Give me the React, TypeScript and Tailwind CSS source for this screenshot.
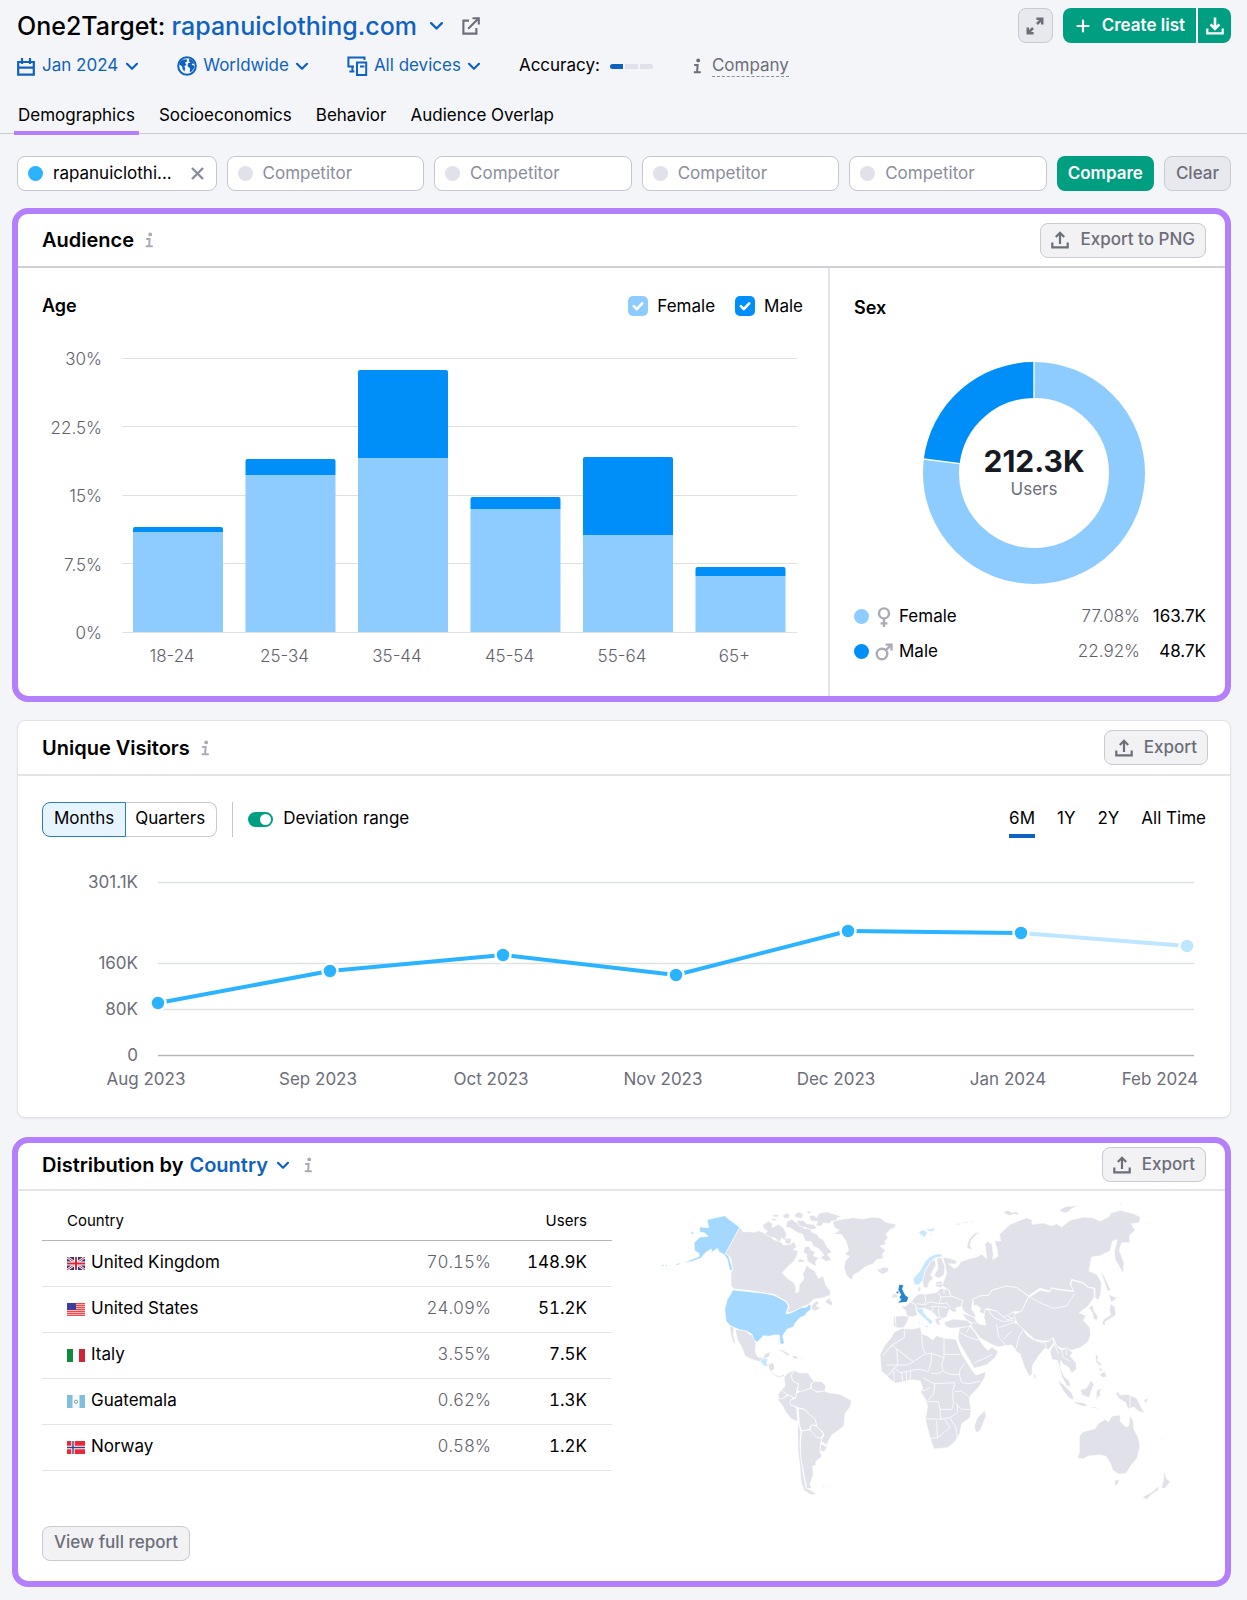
import React, { useState } from 'react';

const ages = [
    { label: '18-24', top: 177, split: 182 },
    { label: '25-34', top: 109, split: 125 },
    { label: '35-44', top: 20, split: 108 },
    { label: '45-54', top: 147, split: 159 },
    { label: '55-64', top: 107, split: 185 },
    { label: '65+', top: 217, split: 226 },
];

const ageTicks = ['30%', '22.5%', '15%', '7.5%', '0%'];

const visits = [
    { x: 116, y: 143, label: 'Aug 2023', lx: 104 },
    { x: 288, y: 111, label: 'Sep 2023', lx: 276 },
    { x: 461, y: 95, label: 'Oct 2023', lx: 449 },
    { x: 634, y: 115, label: 'Nov 2023', lx: 621 },
    { x: 806, y: 71, label: 'Dec 2023', lx: 794 },
    { x: 979, y: 73, label: 'Jan 2024', lx: 966 },
    { x: 1145, y: 86, label: 'Feb 2024', lx: 1118 },
];

const visitTicks = [
    { y: 22, label: '301.1K' },
    { y: 103, label: '160K' },
    { y: 149, label: '80K' },
    { y: 195, label: '0' },
];

const countries = [
    { code: 'gb', name: 'United Kingdom', share: '70.15%', users: '148.9K' },
    { code: 'us', name: 'United States', share: '24.09%', users: '51.2K' },
    { code: 'it', name: 'Italy', share: '3.55%', users: '7.5K' },
    { code: 'gt', name: 'Guatemala', share: '0.62%', users: '1.3K' },
    { code: 'no', name: 'Norway', share: '0.58%', users: '1.2K' },
];

// land shapes, Americas and Greenland
const landWest = [
    'M269 109L280 122 300 122 312 124 326 119 350 128 372 146 392 152 400 162 420 160 432 152 440 168 430 176 445 180 440 196 430 214 415 225 397 245 410 260 432 275 438 290 437 305 446 303 448 280 462 264 458 248 464 238 470 222 480 232 495 240 505 262 520 255 527 282 541 300 541 312 520 320 492 325 476 340 452 350 430 362 410 365 418 345 408 330 372 310 300 299 252 294 243 285 243 245 248 236 242 200 226 188Z',
    'M338 102L355 90 368 98 366 110 385 100 400 110 410 130 404 150 396 140 388 154 376 142 362 138 344 130 352 120 342 114Z',
    'M410 92L425 84 440 95 458 100 462 112 480 112 485 124 500 128 508 140 520 146 530 166 546 184 532 190 545 207 528 212 512 200 522 192 505 172 490 166 484 152 466 150 458 130 440 124 424 112 408 108Z',
    'M442 208L452 204 468 210 458 214 446 213Z',
    'M464 168L478 166 484 178 496 182 490 195 506 200 496 212 500 226 486 220 472 210 470 190 460 184Z',
    'M408 140L416 144 422 138 424 156 412 160 404 152Z',
    'M364 74L378 70 390 74 378 79Z',
    'M398 72L412 66 420 72 416 82 402 82Z',
    'M432 72L446 62 460 70 456 82 438 80Z',
    'M470 60L480 60 484 66 474 68Z',
    'M360 84L372 82 384 88 372 90Z',
    'M476 76L490 72 500 80 508 66 530 62 548 68 575 76 560 82 562 90 544 90 540 98 520 96 512 106 496 104 504 92 484 90Z',
    'M440 88L460 88 470 98 490 100 502 112 484 116 462 108 446 104Z',
    'M548 92L575 85 610 80 640 84 665 78 690 80 708 94 738 100 736 108 720 116 708 128 714 142 704 150 708 160 690 165 706 178 698 188 700 202 680 206 670 218 645 228 628 242 610 252 606 267 590 255 582 230 585 212 598 196 584 190 596 178 588 150 574 130 550 130 568 118 552 108Z',
    'M680 230L690 236 698 228 716 230 714 242 698 250 686 244Z',
    'M525 332L540 318 540 328 548 333 546 344 534 340Z',
    'M484 346L490 336 500 330 508 336 498 344 512 350 496 360 486 356Z',
    'M238 406L252 408 250 430 257 458 250 456 243 432Z',
    'M255 414L290 420 300 432 308 430 318 456 316 482 324 498 340 500 346 487 362 484 358 497 345 503 336 505 330 513 305 505 285 495 276 470 262 445Z',
    'M354 520L370 515 374 532 364 542 374 550 388 556 402 550 404 556 385 560 368 550 356 532Z',
    'M380 478L396 476 420 490 414 495 396 482Z',
    'M424 495L436 494 446 500 436 505Z',
    'M451 502L460 502 458 506Z',
    'M402 560L410 548 424 541 434 536 424 552 428 570 446 578 440 600 437 622 415 612 392 600 405 585Z',
    'M434 538L450 546 474 545 480 556 492 570 482 580 482 592 465 598 452 604 443 598 446 578 428 570 424 552Z',
    'M492 570L515 572 528 585 524 600 498 602 484 592 484 580Z',
    'M392 598L412 610 402 620 388 628 384 612Z',
    'M382 624L400 622 415 612 430 620 420 640 440 650 443 692 424 684 408 664 396 642Z',
    'M437 622L440 606 465 598 485 592 500 604 524 600 535 605 570 610 604 628 602 646 585 668 582 705 560 722 545 732 530 762 510 748 522 735 518 722 500 708 496 685 478 672 465 655 445 650 420 640 422 626Z',
    'M445 652L465 656 480 672 496 685 499 703 484 702 478 715 455 720 448 700Z',
    'M484 702L500 706 520 728 514 742 500 740 480 718Z',
    'M455 720L480 716 500 740 516 742 511 760 510 782 516 796 497 812 498 822 488 826 490 850 480 880 486 892 470 892 462 850 452 800 452 750Z',
    'M512 758L532 768 522 782 510 780Z',
    'M443 694L453 722 450 750 452 800 460 850 468 892 480 896 502 910 482 911 462 898 453 870 450 830 444 780Z',
    'M724 322L730 308 742 310 742 320Z',
    'M515 886L522 884 520 890ZM526 886L532 885 530 890Z',
];

// land shapes, Europe, Africa, Asia and Oceania
const landEast = [
    'M72 424L95 412 130 414 152 408 158 430 172 434 188 447 200 434 225 442 258 445 262 456 275 488 292 515 308 540 318 552 348 542 345 558 325 590 303 612 298 625 303 655 300 680 275 698 270 725 255 752 232 770 192 774 180 740 166 685 173 645 165 622 152 604 157 590 150 570 125 566 100 572 75 577 50 555 34 540 30 490 45 462 62 442Z',
    'M345 658L348 676 330 720 318 725 313 705 322 680Z',
    'M72 376L100 374 118 378 110 395 102 410 78 411 70 402Z',
    'M92 346L108 345 120 332 138 342 138 358 142 372 128 378 112 376 106 358Z',
    'M138 314L150 308 168 310 200 304 212 292 236 296 242 314 278 328 275 346 256 352 262 360 250 364 238 355 230 378 215 384 204 380 186 362 164 352 140 356 138 342 124 332 130 324Z',
    'M194 384L212 378 216 384 206 390 214 404 200 400Z',
    'M143 292L152 284 152 300 144 302Z',
    'M166 238L182 212 194 205 198 222 188 240 182 252 190 262 178 272 172 292 160 288 157 268Z',
    'M200 202L215 200 225 228 222 252 206 262 192 254 204 232Z',
    'M198 272L216 270 222 284 212 290 196 286Z',
    'M218 198L240 202 262 210 256 220 236 218 252 232 264 226 272 212 292 205 320 198 335 190 350 202 345 160 352 150 366 160 370 190 368 205 384 196 382 178 374 150 392 150 388 130 420 100 446 90 470 80 486 86 486 100 520 96 545 104 560 98 575 108 600 88 640 78 668 80 690 90 718 76 722 66 750 58 790 68 812 78 808 96 784 98 795 118 778 135 780 155 755 155 748 178 762 215 760 248 735 205 733 180 742 146 728 150 720 180 690 195 665 198 657 240 680 250 695 275 692 310 685 328 675 320 675 292 655 288 640 275 605 265 600 280 612 300 570 295 545 290 540 300 510 292 476 314 440 290 410 285 365 298 358 312 330 315 308 325 305 355 325 382 300 374 280 360 275 345 278 328 242 314 238 298 216 284 222 268 230 248 226 225Z',
    'M330 315L358 312 365 298 410 285 440 290 476 316 462 345 455 362 430 362 415 374 400 378 380 360 350 352 345 370 325 362 312 345 308 325Z',
    'M345 354L380 360 400 378 430 364 440 375 434 396 452 402 462 418 446 440 448 460 436 478 425 462 400 465 384 468 360 458 330 440 312 418 302 402 310 386 330 400 348 402 342 380Z',
    'M222 394L250 384 290 388 306 400 296 408 266 410 240 412 226 404Z',
    'M275 366L310 378 324 396 306 396 288 384Z',
    'M268 412L300 405 316 425 330 448 340 464 354 478 366 468 385 482 375 500 350 522 312 532 300 510 285 485 268 456 264 440Z',
    'M446 440L460 415 470 432 490 446 520 452 535 452 548 440 552 455 536 476 525 472 508 492 488 522 486 550 478 556 462 525 450 488 436 480Z',
    'M475 320L510 298 540 302 545 292 570 297 612 302 602 282 606 268 640 277 655 290 672 292 673 318 655 345 640 356 628 366 648 374 640 388 660 410 662 430 655 452 630 470 605 478 590 474 575 472 560 465 550 440 535 450 520 450 490 445 465 420 440 395 432 370 455 360Z',
    'M550 442L560 465 575 478 590 470 608 484 600 495 618 515 620 535 605 546 595 528 580 520 572 508 572 530 582 556 598 570 602 588 590 584 575 556 568 525 562 508 546 506 540 480 552 460Z',
    'M656 350L668 342 672 360 684 376 680 390 670 382 668 366Z',
    'M722 338L735 348 738 372 720 384 706 392 704 406 696 396 702 384 722 372 718 356Z',
    'M716 310L728 316 742 320 724 334Z',
    'M690 238L704 258 722 296 714 302 702 270Z',
    'M562 567L580 580 606 606 612 627 598 622 580 600Z',
    'M612 632L640 635 656 645 640 646 616 638ZM662 648L676 648 690 654 670 652Z',
    'M630 598L650 590 662 568 672 580 664 600 658 620 636 612Z',
    'M680 598L696 592 690 602 692 622 686 614 678 630Z',
    'M736 606L746 602 750 612 775 610 800 622 812 645 824 667 805 660 792 648 774 654 766 634 748 624Z',
    'M676 490L685 495 682 508 696 520 690 526 678 512ZM688 552L704 540 710 556 700 560ZM686 530L700 534 690 542Z',
    'M492 546L498 555 496 564 491 560ZM666 450L670 452 668 462Z',
    'M628 735L640 722 675 713 684 698 705 685 715 692 726 675 752 672 750 690 768 708 776 704 780 672 790 690 792 715 805 740 810 765 802 800 782 825 768 848 745 849 728 838 722 818 708 796 690 792 655 795 640 804 622 802 628 785Z',
    'M735 866L749 868 742 882 734 884Z',
    'M882 838L890 864 901 872 885 892 873 892 880 870Z',
    'M865 886L866 896 842 912 830 926 817 918 845 904Z',
    'M334 121L318 132 304 148 300 164 308 176 290 172 296 146 312 128Z',
    'M398 64L414 58 424 64 442 62 446 72 430 70 418 74Z',
    'M568 56L588 46 622 44 604 54 590 66 576 64Z',
    'M744 40L752 36 756 40ZM258 100L268 94 268 104ZM280 94L294 92 290 98ZM302 92L312 88 310 94Z',
    'M872 738L882 748 876 746ZM820 628L834 620 830 636Z',
    'M826 96L836 97 832 100Z',
];

const borders = [
    'M103 416L103 440 66 462 40 492M80 474L130 512 162 490 185 487M152 410L155 430 158 470 165 486M66 462L80 474 84 522 50 522M84 522L60 542M84 522L112 522 130 512M185 487L222 500 222 440M222 490L270 490',
    'M185 487L183 515 175 542 150 535 122 538 120 566M183 546L205 548 218 540 240 550 268 550M222 500L215 520 218 540M285 515L270 535 268 550 275 575 300 578 330 570M160 560L185 575 195 578 190 610 172 630M195 578L255 575',
    'M172 632L205 632 210 655 245 655 250 640 248 600 255 575',
    'M255 602L275 600 302 622M255 635L275 655 303 655M210 655L212 685 165 683M212 685L240 680 262 665 262 640M200 690L202 740 182 742M202 740L225 722 240 710 225 685M240 680L258 710 262 742M95 545L98 572M108 542L110 570M50 555L72 540 72 576M120 540L90 545 70 530M150 570L160 600 180 590',
    'M480 318L510 335 550 352 590 345 602 325 614 308',
    'M164 312L168 330 160 342M140 338L165 342 180 332 208 338 212 318 204 304M180 348L200 346 232 350M212 318L242 316M208 338L232 336 240 350M205 350L208 378M186 362L190 350M222 290L222 308',
    'M350 352L372 380 400 392 430 388M380 400L386 440 408 462M386 410L420 398 440 392M425 420L400 445M270 425L300 440 330 448M312 515L350 500 365 490M300 404L290 425',
    'M524 452L530 478M575 478L580 500 600 510M588 474L590 492M552 455L566 490M462 418L500 450 520 456M780 612L780 656M76 376L78 410',
    'M400 378L412 386 434 380M412 374L430 384M196 280L220 278',
];

function Chevron({ size = 14 }: { size?: number }) {
    return (
        <svg width={size} height={size} viewBox="0 0 14 14" fill="none" stroke="currentColor" strokeWidth="2.2" strokeLinecap="round" strokeLinejoin="round">
            <path d="M2 4.8l5 5 5-5" />
        </svg>
    )
}

function Info({ className }: { className: string }) {
    return (
        <svg className={className} width="9" height="16" viewBox="0 0 9 16" fill="none" stroke="currentColor" strokeWidth="2">
            <circle cx="5.2" cy="2.4" r="1.9" fill="currentColor" stroke="none" />
            <path d="M1.2 7h3.4l-.5 7M.8 14.2h7" />
        </svg>
    )
}

function TrayIcon({ down }: { down?: boolean }) {
    return (
        <svg width="18" height="18" viewBox="0 0 18 18" fill="none" stroke="currentColor" strokeWidth="2.2">
            <path d="M1.3 11.6v4.8h15.4v-4.8" />
            {down
                ? <path strokeWidth="2.6" d="M9 .6v10.8M4.6 7.4L9 11.8l4.4-4.4" />
                : <path d="M9 13V2.4M4.8 6L9 1.8 13.2 6" />}
        </svg>
    )
}

function ExportButton({ label }: { label: string }) {
    return (
        <button className="flex h-[35px] items-center gap-[11px] rounded-lg border border-[#c9cad2] bg-[#f2f2f5] px-[10px] text-[17px] font-medium text-[#6c6e79]">
            <TrayIcon />
            {label}
        </button>
    )
}

function Flag({ code }: { code: string }) {
    return (
        <svg width="18" height="13" viewBox="0 0 18 13" className="shrink-0">
            {code === 'gb' && <>
                <path fill="#27337d" d="M0 0h18v13H0z" />
                <path stroke="#fff" strokeWidth="2.6" d="M0 0l18 13M18 0L0 13" />
                <path stroke="#d8263c" strokeWidth="1" d="M0 0l18 13M18 0L0 13" />
                <path stroke="#fff" strokeWidth="4" d="M9 0v13M0 6.5h18" />
                <path stroke="#d8263c" strokeWidth="2" d="M9 0v13M0 6.5h18" />
            </>}
            {code === 'us' && <>
                <path fill="#fbb4b4" d="M0 0h18v13H0z" />
                <path stroke="#f0474c" strokeWidth="1" d="M0 .5h18M0 2.5h18M0 4.5h18M0 6.5h18M0 8.5h18M0 10.5h18M0 12.5h18" />
                <path fill="#3a3f9b" d="M0 0h9v7H0z" />
            </>}
            {code === 'it' && <>
                <path fill="#fafafa" d="M0 0h18v13H0z" />
                <path fill="#128a3e" d="M0 0h6v13H0z" />
                <path fill="#cc2637" d="M12 0h6v13h-6z" />
            </>}
            {code === 'gt' && <>
                <path fill="#f6f9fb" d="M0 0h18v13H0z" />
                <path fill="#81bede" d="M0 0h5.5v13H0zM12.5 0H18v13h-5.5z" />
                <circle cx="9" cy="6.8" r="1.6" fill="none" stroke="#7fa77c" strokeWidth="1" />
            </>}
            {code === 'no' && <>
                <path fill="#ea2839" d="M0 0h18v13H0z" />
                <path stroke="#fff" strokeWidth="3.4" d="M6 0v13M0 6.5h18" />
                <path stroke="#3a3f7f" strokeWidth="1.4" d="M6 0v13M0 6.5h18" />
            </>}
        </svg>
    )
}

function TopBar() {
    return (
        <header>
            <div className="flex items-center justify-between pt-2">
                <h1 className="flex items-center text-[25px] leading-[34px] font-medium">
                    <span>One2Target:</span>
                    <a href="#domain" className="ml-[6px] flex items-center gap-3 text-[#1062c0]">
                        rapanuiclothing.com <Chevron size={15} />
                    </a>
                    <a href="#open" aria-label="Open site" className="ml-[18px] text-[#6c6e79]">
                        <svg width="18" height="18" viewBox="0 0 18 18" fill="none" stroke="currentColor" strokeWidth="2.1">
                            <path d="M7 3.6H1.4v13h13V11M10.5 1.2h6.3v6.3M16.4 1.6L6.2 11.8" />
                        </svg>
                    </a>
                </h1>
                <div className="flex items-center">
                    <button aria-label="Expand" className="mr-[10px] flex size-[35px] items-center justify-center rounded-lg border border-[#c9cad2] bg-[#e8e9ef] text-[#6c6e79]">
                        <svg width="18" height="18" viewBox="0 0 18 18" fill="none" stroke="currentColor" strokeWidth="2.6">
                            <path d="M10.4 1.8h5.8v5.8M15.8 2.2l-4.8 4.8M1.8 10.4v5.8h5.8M2.2 15.8l4.8-4.8" />
                        </svg>
                    </button>
                    <button className="flex h-[35px] items-center gap-3 rounded-l-lg bg-[#009f81] pr-[11px] pl-[13px] text-[17px] font-semibold text-white">
                        <svg width="14" height="14" viewBox="0 0 14 14" stroke="currentColor" strokeWidth="2.2" strokeLinecap="round">
                            <path d="M7 1.5v11M1.5 7h11" />
                        </svg>
                        Create list
                    </button>
                    <button aria-label="Download" className="flex h-[35px] w-[35px] items-center justify-center rounded-r-lg border-l-2 border-white bg-[#009f81] text-white">
                        <TrayIcon down />
                    </button>
                </div>
            </div>

            <div className="mt-[9px] flex h-7 items-center text-[17px] text-[#1062c0]">
                <button className="flex items-center gap-[7px]">
                    <svg width="18" height="19" viewBox="0 0 18 19" fill="none" stroke="currentColor" strokeWidth="2.2">
                        <path d="M1.2 5h15.6v12.6H1.2zM1.2 10.6h15.6M5 1v6M13 1v6" />
                    </svg>
                    Jan 2024 <Chevron />
                </button>
                <button className="ml-[38px] flex items-center gap-[6px]">
                    <svg width="20" height="20" viewBox="0 0 20 20" fill="none">
                        <circle cx="10" cy="10" r="8.8" stroke="currentColor" strokeWidth="2" />
                        <path fill="currentColor" d="M2.6 6.6l3-2.8 4-.6.6 2-2.2 1.6 1.4 2-2 1.4.8 2.4-.8 3-1.8-2.4-.4-2.8-2.8-1.8zM12.4 2.6l3.6 2.4 1.6 3-2-.4-1 1.2 2.4.8.6 1.6-3 4.4-1.8.6.2-4-2.4-2 .4-3 2.4-.6-1.6-1.6z" />
                    </svg>
                    Worldwide <Chevron />
                </button>
                <button className="ml-[38px] flex items-center gap-[6px]">
                    <svg width="21" height="20" viewBox="0 0 21 20" fill="none" stroke="currentColor" strokeWidth="2">
                        <path d="M17.5 4V1.4H1.4v9H7M5.4 10.5v5M2.4 15.4h5M10 6.4h9.2V19H10zM13 10.4h3.4v1" />
                    </svg>
                    All devices <Chevron />
                </button>
                <span className="ml-[38px] text-black">Accuracy:</span>
                <span className="ml-[10px] flex gap-[2px]">
                    <span className="h-[5px] w-[13px] rounded-l-sm bg-[#1062c0]"></span>
                    <span className="h-[5px] w-[13px] bg-[#e0e1e9]"></span>
                    <span className="h-[5px] w-[13px] rounded-r-sm bg-[#e0e1e9]"></span>
                </span>
                <Info className="ml-[40px] text-[#6c6e79]" />
                <a href="#company" className="ml-[10px] border-b border-dashed border-[#8a8e9b] leading-[21px] text-[#6c6e79]">Company</a>
            </div>
        </header>
    )
}

function Tabs() {
    return (
        <nav className="-mr-4 -ml-[17px] mt-[23px] flex border-b border-[#c9cad2] pl-[14px] text-[17px] leading-6">
            <a href="#demographics" className="-mb-[2px] border-b-4 border-[#b47ffc] px-1 pb-1">Demographics</a>
            <a href="#socioeconomics" className="ml-5">Socioeconomics</a>
            <a href="#behavior" className="ml-6">Behavior</a>
            <a href="#overlap" className="ml-6">Audience Overlap</a>
        </nav>
    )
}

function Competitors() {
    const [domain, setDomain] = useState('rapanuiclothi...');

    return (
        <form className="mt-[22px] flex gap-[10px] text-[17px]">
            <label className="flex h-[35px] min-w-0 flex-1 items-center rounded-lg border border-[#c4c7cf] bg-white pr-3 pl-[10px]">
                <span className="size-[15px] shrink-0 rounded-full bg-[#2bb3ff]"></span>
                <input aria-label="Your domain" value={domain} onChange={(e) => setDomain(e.target.value)} className="ml-[10px] w-full min-w-0 outline-none" />
                <button type="button" aria-label="Remove" onClick={() => setDomain('')} className="text-[#8a8e9b]">
                    <svg width="13" height="13" viewBox="0 0 13 13" stroke="currentColor" strokeWidth="2.4">
                        <path d="M1 1l11 11M12 1L1 12" />
                    </svg>
                </button>
            </label>
            {[1, 2, 3, 4].map((n) => (
                <label key={n} className="flex h-[35px] min-w-0 flex-1 items-center rounded-lg border border-[#c4c7cf] bg-white px-[10px]">
                    <span className="size-[15px] shrink-0 rounded-full bg-[#e0e1e9]"></span>
                    <input aria-label={`Competitor ${n}`} placeholder="Competitor" className="ml-[10px] w-full min-w-0 outline-none placeholder:text-[#8a8e9b]" />
                </label>
            ))}
            <button type="button" className="h-[35px] rounded-lg bg-[#009f81] px-[11px] font-semibold text-white">Compare</button>
            <button type="button" className="h-[35px] rounded-lg border border-[#c9cad2] bg-[#e8e9ef] px-[11px] font-medium text-[#6c6e79]">Clear</button>
        </form>
    )
}

function LegendCheck({ label, className }: { label: string; className: string }) {
    return (
        <label className="flex items-center gap-[9px] text-[17px] leading-6">
            <span className="relative flex size-5">
                <input type="checkbox" defaultChecked className={`size-5 appearance-none rounded-[5px] ${className}`} />
                <svg className="pointer-events-none absolute inset-0" viewBox="0 0 20 20" fill="none" stroke="#fff" strokeWidth="2.6" strokeLinecap="round" strokeLinejoin="round">
                    <path d="M5.8 10.2l3 3 5.4-5.8" />
                </svg>
            </span>
            {label}
        </label>
    )
}

function AgeChart() {
    return (
        <svg viewBox="0 0 763 324" className="w-full" fontSize="17" fontWeight="300" fill="#5f616c">
            {ageTicks.map((tick, i) => (
                <g key={tick}>
                    <path d={`M80 ${Math.round(7.5 + i * 68.6) + 0.5}h675`} stroke="#e0e1e3" strokeWidth="1" />
                    <text x="60" y={Math.round(15 + i * 68.5)} textAnchor="end">{tick}</text>
                </g>
            ))}
            {ages.map((age, i) => (
                <g key={age.label}>
                    <path fill="#8eccff" d={`M${91 + i * 112.5} ${age.split}h90V282h-90z`} />
                    <path fill="#008ff8" d={`M${91 + i * 112.5} ${age.split}V${age.top + 2}q0-2 2-2h86q2 0 2 2V${age.split}z`} />
                    <text x={130 + i * 112.5} y="312" textAnchor="middle">{age.label}</text>
                </g>
            ))}
        </svg>
    )
}

function Donut() {
    return (
        <div className="relative mt-[42px] ml-[69px] size-[222px]">
            <svg viewBox="-111 -111 222 222" fill="none">
                <circle r="93" stroke="#8eccff" strokeWidth="36" />
                <circle r="93" stroke="#008ff8" strokeWidth="36" pathLength="100" strokeDasharray="23 77" transform="rotate(-172.8)" />
                <path d="M0 -74v-38M-74 -9.4l-38 -4.8" stroke="#fff" strokeWidth="1.4" />
            </svg>
            <div className="absolute inset-0 flex flex-col items-center justify-center text-center">
                <p className="text-[30px] leading-8 font-bold text-[#171a22]">212.3K</p>
                <p className="text-[17px] leading-6 text-[#6c6e79]">Users</p>
            </div>
        </div>
    )
}

function Audience() {
    return (
        <section className="mt-[17px] -ml-[5px] rounded-2xl border-6 border-[#b47ffc] bg-white">
            <div className="flex h-[54px] items-center justify-between border-b-2 border-[#cfd0d8] pr-[19px] pl-6">
                <h2 className="flex items-center gap-[11px] text-[20px] font-semibold">Audience <Info className="text-[#a9abb6]" /></h2>
                <ExportButton label="Export to PNG" />
            </div>
            <div className="flex">
                <div className="flex-1 border-r-2 border-[#e4e5e9] pt-[26px] pr-[23px] pb-[22px] pl-6">
                    <div className="mb-8 flex items-center gap-5 pr-[2px]">
                        <h3 className="mr-auto text-[18px] leading-6 font-semibold">Age</h3>
                        <LegendCheck label="Female" className="bg-[#8eccff]" />
                        <LegendCheck label="Male" className="bg-[#008ff8]" />
                    </div>
                    <AgeChart />
                </div>
                <div className="w-[395px] shrink-0 pt-[28px] pr-[19px] pl-6">
                    <h3 className="text-[18px] leading-6 font-semibold">Sex</h3>
                    <Donut />
                    <ul className="mt-[15px] text-[17px] leading-[35px]">
                        <li className="flex items-center">
                            <span className="size-[15px] rounded-full bg-[#8eccff]"></span>
                            <svg className="mx-[7px]" width="16" height="20" viewBox="0 0 16 20" fill="none" stroke="#a9abb6" strokeWidth="2.4">
                                <circle cx="8" cy="6.4" r="5" />
                                <path d="M8 11.4V20M4.6 16.4h6.8" />
                            </svg>
                            Female
                            <span className="ml-auto font-light text-[#5f616c]">77.08%</span>
                            <span className="w-[66px] text-right">163.7K</span>
                        </li>
                        <li className="flex items-center">
                            <span className="size-[15px] rounded-full bg-[#008ff8]"></span>
                            <svg className="mx-[6px]" width="18" height="18" viewBox="0 0 18 18" fill="none" stroke="#a9abb6" strokeWidth="2.4">
                                <circle cx="7" cy="11" r="5.3" />
                                <path d="M10.8 7.2L16 2M10.6 1.6h5.9v5.9" />
                            </svg>
                            Male
                            <span className="ml-auto font-light text-[#5f616c]">22.92%</span>
                            <span className="w-[66px] text-right">48.7K</span>
                        </li>
                    </ul>
                </div>
            </div>
        </section>
    )
}

function VisitorsChart() {
    return (
        <svg viewBox="0 0 1164 240" className="mt-[22px] w-full" fontSize="17" fill="#6c6e79">
            {visitTicks.map((tick) => (
                <g key={tick.label}>
                    <path d={`M116 ${tick.y}.5h1036`} stroke={tick.label === '0' ? '#b4b6bd' : '#e0e1e3'} strokeWidth="1.4" />
                    <text x="96" y={tick.y + 6} textAnchor="end">{tick.label}</text>
                </g>
            ))}
            {visits.slice(1).map((v, i) => (
                <path key={v.label} d={`M${visits[i].x} ${visits[i].y}L${v.x} ${v.y}`} strokeWidth="4" stroke={i === 5 ? '#bfe6ff' : '#2bb3ff'} />
            ))}
            {visits.map((v, i) => (
                <g key={v.label}>
                    <circle cx={v.x} cy={v.y} r="7.5" fill={i === 6 ? '#bfe6ff' : '#2bb3ff'} stroke="#fff" strokeWidth="2.5" />
                    <text x={v.lx} y="225" textAnchor="middle">{v.label}</text>
                </g>
            ))}
        </svg>
    )
}

function UniqueVisitors() {
    const [period, setPeriod] = useState('Months');
    const [range, setRange] = useState('6M');

    return (
        <section className="mt-[18px] rounded-lg border border-[#e0e1e9] bg-white shadow-xs">
            <div className="flex h-[55px] items-center justify-between border-b-2 border-[#e4e5e9] pr-[22px] pl-6">
                <h2 className="flex items-center gap-[11px] text-[20px] font-semibold">Unique Visitors <Info className="text-[#a9abb6]" /></h2>
                <ExportButton label="Export" />
            </div>
            <div className="px-6 pt-6 pb-[17px]">
                <div className="flex items-center text-[17px]">
                    {['Months', 'Quarters'].map((name) => (
                        <button
                            key={name}
                            onClick={() => setPeriod(name)}
                            className={`h-[35px] border px-[11px] first:rounded-l-lg nth-2:rounded-r-lg nth-2:border-l-0 nth-2:pl-[9px] ${period === name ? 'border-[#2b7bc9] bg-[#e6f4ff]' : 'border-[#c9cad2] bg-white'}`}
                        >
                            {name}
                        </button>
                    ))}
                    <span className="mx-[15px] h-[35px] w-px bg-[#c4c7cf]"></span>
                    <label className="flex items-center gap-[10px]">
                        <input type="checkbox" role="switch" defaultChecked className="flex h-[15px] w-[25px] appearance-none items-center justify-end rounded-full bg-[#009f81] pr-[2px] before:size-[11px] before:rounded-full before:bg-white" />
                        Deviation range
                    </label>
                    <div className="ml-auto flex gap-[22px]">
                        {['6M', '1Y', '2Y', 'All Time'].map((name) => (
                            <button
                                key={name}
                                onClick={() => setRange(name)}
                                className={`h-[38px] border-y-4 border-t-transparent ${range === name ? 'border-b-[#1062c0]' : 'border-b-transparent'}`}
                            >
                                {name}
                            </button>
                        ))}
                    </div>
                </div>
                <VisitorsChart />
            </div>
        </section>
    )
}

function WorldMap() {
    return (
        <svg viewBox="0 0 1620 960" className="w-[540px] max-w-full self-start" fill="#e0e1e9" stroke="#fff" strokeWidth="2" strokeLinejoin="round">
            {landWest.map((d) => <path key={d} d={d} />)}
            <g fill="#a5d8ff">
                <path d="M248 297L300 302 350 308 372 313 408 332 415 345 408 368 422 366 440 357 452 350 470 348 477 340 483 343 482 356 470 365 464 374 450 380 436 395 430 408 412 414 402 428 398 436 403 455 396 462 390 455 388 432 372 432 358 436 340 434 322 454 312 447 306 430 290 420 268 416 240 404 228 390 224 355 232 325 242 310Z" />
                <path d="M171 86L223 74 269 109 226 188 236 196 248 235 240 240 232 205 222 190 208 184 202 172 183 186 185 174 168 184 152 202 124 212 100 215 148 196 146 186 134 180 132 155 150 138 174 136 164 126 150 124 148 108 176 110Z" />
                <path stroke="none" d="M78 220L92 216 82 222ZM122 120L132 128 126 129ZM34 222L42 221 40 225ZM46 223L52 223 49 226Z" />
            </g>
            <g fill="#c6e7ff">
                <path d="M330 512L340 501 354 504 350 516 356 528 342 524Z" />
            </g>
            <path fill="#2b82cf" stroke="none" d="M748 281L760 283 756 294 765 312 775 320 770 332 744 335 754 326 748 318 754 312 745 296ZM738 303L746 301 744 309Z" />
            <g transform="translate(660)">
                {landEast.map((d) => <path key={d} d={d} />)}
                <g fill="#c6e7ff">
                    <path d="M130 262L150 240 165 212 178 198 195 190 214 188 217 197 196 200 182 212 166 236 158 268 146 282 132 280Z" />
                    <path d="M138 358L150 352 162 356 160 364 172 378 188 390 182 402 168 386 150 370ZM162 404L176 404 172 411ZM145 390L150 390 149 402Z" />
                    <path d="M145 123L160 116 172 124 164 140 152 130ZM168 112L180 114 194 110 190 122 174 120ZM178 130L186 130 182 136Z" />
                </g>
                <path d={borders.join('')} fill="none" strokeWidth="2.4" />
                <path d="M306 350L318 342 332 352 326 366 334 390 322 386Z" fill="#fff" />
            </g>
        </svg>
    )
}

function Distribution() {
    return (
        <section className="mt-[19px] -ml-[5px] rounded-2xl border-6 border-[#b47ffc] bg-white">
            <div className="flex h-[48px] items-center justify-between border-b-2 border-[#e4e5e9] pr-[19px] pb-[3px] pl-6">
                <h2 className="flex items-center text-[20px] font-semibold">
                    Distribution by
                    <button className="mx-[6px] flex items-center gap-2 text-[#1062c0]">Country <Chevron /></button>
                    <Info className="ml-2 text-[#a9abb6]" />
                </h2>
                <ExportButton label="Export" />
            </div>
            <div className="flex justify-between pr-[35px] pl-6">
                <div className="w-[570px]">
                    <table className="mt-[11px] w-full text-[17px] tabular-nums">
                        <thead>
                            <tr className="h-[38px] border-b border-[#b4b6bd] text-[15px]">
                                <th className="pl-[25px] text-left font-normal">Country</th>
                                <th aria-label="Share"></th>
                                <th className="pr-[25px] text-right font-normal">Users</th>
                            </tr>
                        </thead>
                        <tbody>
                            {countries.map((c) => (
                                <tr key={c.code} className="h-[46px] border-b border-[#e4e5e9]">
                                    <td className="pl-[25px]">
                                        <span className="flex items-center gap-[6px]"><Flag code={c.code} /> {c.name}</span>
                                    </td>
                                    <td className="text-right font-light text-[#5f616c]">{c.share}</td>
                                    <td className="w-[121px] pr-[25px] text-right">{c.users}</td>
                                </tr>
                            ))}
                        </tbody>
                    </table>
                    <button className="mt-[55px] mb-5 h-[35px] rounded-lg border border-[#c9cad2] bg-[#f2f2f5] px-[11px] text-[17px] font-medium text-[#6c6e79]">View full report</button>
                </div>
                <WorldMap />
            </div>
        </section>
    )
}

function App() {
    return (
        <main className="min-h-screen bg-[#f4f5f9] pr-4 pb-3 pl-[17px] font-['Inter',sans-serif] text-black">
            <TopBar />
            <Tabs />
            <Competitors />
            <Audience />
            <UniqueVisitors />
            <Distribution />
        </main>
    )
}

export default App;
